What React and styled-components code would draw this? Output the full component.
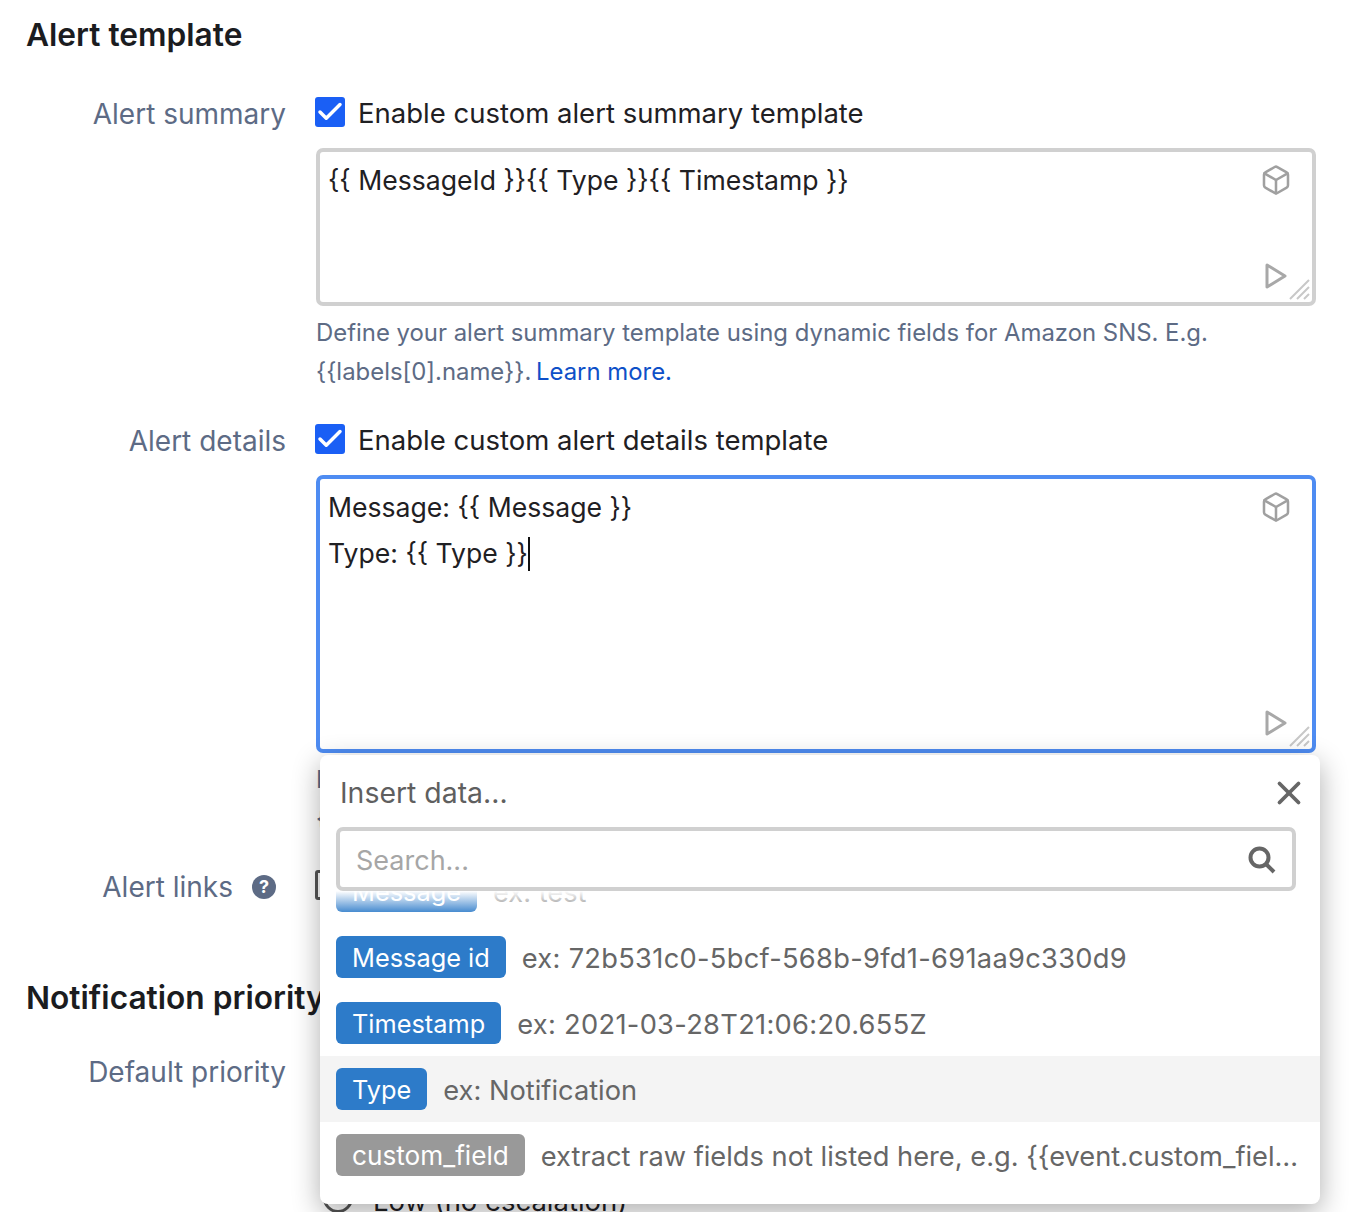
import React from "react";
import styled, { createGlobalStyle } from "styled-components";
import { Box, Check, X } from "lucide-react";

const Global = createGlobalStyle`
  html, body { margin: 0; padding: 0; background: #fff; }
  body { font-family: Inter, "Liberation Sans", sans-serif; color: #1f2023; }
  * { box-sizing: border-box; }
`;

const Page = styled.div`
  position: relative;
  width: 1360px;
  height: 1212px;
  overflow: hidden;
  padding: 15px 44px 0 27px;
`;
const Heading = styled.h2`
  margin: ${(p) => p.$top || 0}px 0 0 -1px;
  font-size: 31.7px;
  line-height: 40px;
  font-weight: 600;
  color: #1b1c1f;
`;
const Row = styled.div`
  display: grid;
  grid-template-columns: 259px 1fr;
  column-gap: 29px;
  margin-top: ${(p) => p.$top}px;
`;
const Label = styled.div`
  font-size: 28px;
  line-height: 36px;
  color: #5d6b85;
  padding-right: ${(p) => (p.$help ? "10px" : "0")};
  display: flex;
  justify-content: flex-end;
  align-items: center;
  gap: 19px;
  height: 36px;
  margin-top: 1px;
  white-space: nowrap;
`;
const HelpDot = styled.span`
  width: 24px;
  height: 24px;
  border-radius: 50%;
  background: #5d6b85;
  color: #fff;
  font-size: 18px;
  font-weight: 700;
  line-height: 24px;
  text-align: center;
`;
const CheckRow = styled.div`
  display: flex;
  align-items: center;
  gap: 13px;
  height: 34px;
  font-size: 27.5px;
  color: #1f2023;
`;
const CheckText = styled.span`
  padding-top: 2px;
`;
const CheckBox = styled.span`
  width: 30px;
  height: 30px;
  border-radius: 3px;
  background: ${(p) => (p.$on ? "#1a5ff5" : "#fff")};
  border: ${(p) => (p.$on ? "0" : "3px solid #555")};
  display: flex;
  align-items: center;
  justify-content: center;
  flex: none;
`;
const Area = styled.div`
  position: relative;
  margin: 19px 0 0 1px;
  width: 1000px;
  height: ${(p) => p.$h}px;
  border: 4px solid ${(p) => (p.$focus ? "#4e8cf2" : "#d0d0d0")};
  border-radius: 7px;
  padding: 5px 8px;
  font-size: 26.6px;
  line-height: 46px;
  color: #1f2023;
`;
const Caret = styled.span`
  display: inline-block;
  width: 2px;
  height: 34px;
  background: #111;
  vertical-align: -8px;
`;
const CubeSlot = styled.span`
  position: absolute;
  top: 12px;
  right: 20px;
  color: #a0a0a0;
  display: flex;
`;
const PlaySlot = styled.span`
  position: absolute;
  bottom: 12px;
  right: 24px;
  display: flex;
`;
const GripSlot = styled.span`
  position: absolute;
  bottom: 1px;
  right: 1px;
  display: flex;
`;
const Help = styled.div`
  margin: 7px 0 0 1px;
  font-size: 23.9px;
  line-height: 39px;
  color: #5d6b85;
`;
const More = styled.a`
  color: #0e50c8;
  margin-left: -2px;
`;
const Radio = styled.div`
  display: flex;
  align-items: flex-start;
  gap: 20px;
  margin: 130px 0 0 8px;
  font-size: 27.44px;
  line-height: 36px;
  color: #1f2023;
`;
const RadioDot = styled.span`
  width: 30px;
  height: 30px;
  border-radius: 50%;
  border: 3px solid #555;
  flex: none;
`;

const Popup = styled.div`
  position: absolute;
  left: 320px;
  top: 755px;
  width: 1000px;
  height: 449px;
  background: #fff;
  border-radius: 8px;
  box-shadow: 0 8px 28px rgba(0, 0, 0, 0.32);
  overflow: hidden;
`;
const PopHead = styled.div`
  display: flex;
  align-items: center;
  justify-content: space-between;
  padding: 3px 12px 0 20px;
  height: 72px;
  font-size: 28.4px;
  color: #5f5f5f;
`;
const SearchBox = styled.div`
  position: relative;
  z-index: 2;
  margin: 0 24px 0 16px;
  height: 64px;
  border: 4px solid #d0d0d0;
  border-radius: 7px;
  background: #fff;
  display: flex;
  align-items: center;
  justify-content: space-between;
  padding: 2px 15px 0 16px;
  font-size: 27px;
  color: #a6a6a6;
`;
const List = styled.div`
  position: relative;
  height: 314px;
  overflow: hidden;
  &::before {
    content: "";
    position: absolute;
    z-index: 1;
    left: 0;
    right: 0;
    top: 0;
    height: 24px;
    background: linear-gradient(rgba(255, 255, 255, 1), rgba(255, 255, 255, 0));
  }
`;
const Item = styled.div`
  display: flex;
  align-items: center;
  gap: 16px;
  height: 66px;
  padding: 0 20px 0 16px;
  background: ${(p) => (p.$hot ? "#f4f4f4" : "transparent")};
  &:first-child {
    margin-top: -33px;
  }
`;
const Chip = styled.span`
  flex: none;
  height: 42px;
  line-height: 44px;
  padding: 0 16px;
  border-radius: 6px;
  background: ${(p) => (p.$grey ? "#999999" : "#2d7bc9")};
  color: #fff;
  font-size: ${(p) => (p.$grey ? "26.2px" : "25.35px")};
`;
const Sample = styled.span`
  flex: 1;
  min-width: 0;
  padding-top: 2px;
  font-size: 27.25px;
  letter-spacing: ${(p) => (p.$digits ? "0.3px" : "0")};
  color: #666;
  white-space: nowrap;
  overflow: hidden;
  text-overflow: ellipsis;
`;

const Play = () => (
  <svg width="24" height="28" viewBox="0 0 24 28" fill="none" stroke="#a8a8a8" strokeWidth="3" strokeLinejoin="round">
    <path d="M3 3 L21 14 L3 25 Z" />
  </svg>
);
const Grip = () => (
  <svg width="22" height="22" viewBox="0 0 22 22" fill="none" stroke="#c8c8c8" strokeWidth="2">
    <path d="M1 20 L20 1 M8 20 L20 8 M15 20 L20 15" />
  </svg>
);
const Loupe = () => (
  <svg width="30" height="30" viewBox="0 0 30 30" fill="none" stroke="#666" strokeWidth="4">
    <circle cx="12.5" cy="12.5" r="9" />
    <path d="M19 19 L27 27" />
  </svg>
);

const Template = ({ focus, h, children }) => (
  <Area $focus={focus} $h={h}>
    {children}
    <CubeSlot><Box size={32} strokeWidth={1.9} /></CubeSlot>
    <PlaySlot><Play /></PlaySlot>
    <GripSlot><Grip /></GripSlot>
  </Area>
);

const rows = [
  ["Message", "ex: test"],
  ["Message id", "ex: 72b531c0-5bcf-568b-9fd1-691aa9c330d9", false, false, true],
  ["Timestamp", "ex: 2021-03-28T21:06:20.655Z", false, false, true],
  ["Type", "ex: Notification", true],
  ["custom_field", "extract raw fields not listed here, e.g. {{event.custom_field}} and more", false, true],
];

export default function App() {
  return (
    <Page>
      <Global />
      <Heading>Alert template</Heading>
      <Row $top={40}>
        <Label>Alert summary</Label>
        <div>
          <CheckRow>
            <CheckBox $on><Check size={30} color="#fff" strokeWidth={2.8} /></CheckBox>
            <CheckText>Enable custom alert summary template</CheckText>
          </CheckRow>
          <Template h={158}>{"{{ MessageId }}{{ Type }}{{ Timestamp }}"}</Template>
          <Help>
            Define your alert summary template using dynamic fields for Amazon SNS. E.g.
            <br />
            {"{{labels[0].name}}. "}<More>Learn more.</More>
          </Help>
        </div>
      </Row>
      <Row $top={31}>
        <Label>Alert details</Label>
        <div>
          <CheckRow>
            <CheckBox $on><Check size={30} color="#fff" strokeWidth={2.8} /></CheckBox>
            <CheckText>Enable custom alert details template</CheckText>
          </CheckRow>
          <Template focus h={278}>
            Message: {"{{ Message }}"}
            <br />
            Type: {"{{ Type }}"}<Caret />
          </Template>
          <Help>
            Define your alert details template using dynamic fields for Amazon SNS. E.g.
            <br />
            {"{{labels[0].name}}. "}<More>Learn more.</More>
          </Help>
        </div>
      </Row>
      <Row $top={30}>
        <Label $help>Alert links <HelpDot>?</HelpDot></Label>
        <CheckRow><CheckBox /><CheckText>Add custom links</CheckText></CheckRow>
      </Row>
      <Heading $top={73}>Notification priority</Heading>
      <Row $top={35}>
        <Label>Default priority</Label>
        <Radio><RadioDot />Low (no escalation)</Radio>
      </Row>
      <Popup>
        <PopHead>
          Insert data...
          <X size={38} color="#666" strokeWidth={2.4} />
        </PopHead>
        <SearchBox>
          Search...
          <Loupe />
        </SearchBox>
        <List>
          {rows.map(([name, ex, hot, grey, digits]) => (
            <Item key={name} $hot={hot}>
              <Chip $grey={grey}>{name}</Chip>
              <Sample $digits={digits}>{ex}</Sample>
            </Item>
          ))}
        </List>
      </Popup>
    </Page>
  );
}
